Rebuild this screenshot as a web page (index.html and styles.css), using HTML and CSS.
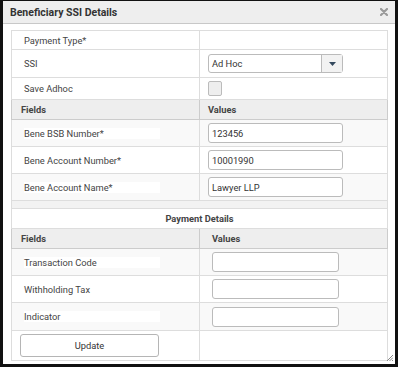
FILE: index.html
```html
<!DOCTYPE html>
<html lang="en">
<head>
  <meta charset="UTF-8">
  <title>Beneficiary SSI Details</title>
  <link rel="stylesheet" href="styles.css">
</head>
<body>

<div class="dialog">
  <div class="dialog-header">
    <span class="dialog-title">Beneficiary SSI Details</span>
    <svg class="close" width="8" height="8" viewBox="0 0 8 8">
      <path d="M1 1 L7 7 M7 1 L1 7" stroke="#9a9a9a" stroke-width="2.2" stroke-linecap="round"/>
    </svg>
  </div>

  <div class="dialog-body">
    <table class="ssi-table">
      <colgroup>
        <col class="col-field">
        <col class="col-value">
      </colgroup>
      <tr class="row-short">
        <td><label>Payment Type*</label></td>
        <td></td>
      </tr>
      <tr class="row-select">
        <td><label>SSI</label></td>
        <td>
          <div class="select">
            <span class="select-text">Ad Hoc</span>
            <span class="select-btn">
              <svg width="7" height="4" viewBox="0 0 7 4"><path d="M0 0 H7 L3.5 4 Z" fill="#34495e"/></svg>
            </span>
          </div>
        </td>
      </tr>
      <tr class="row-check">
        <td><label>Save Adhoc</label></td>
        <td><span class="checkbox"></span></td>
      </tr>
      <tr class="row-head">
        <th>Fields</th>
        <th>Values</th>
      </tr>
      <tr class="row-input stripe">
        <td><label class="boxed">Bene BSB Number*</label></td>
        <td><input class="field" type="text" value="123456"></td>
      </tr>
      <tr class="row-input">
        <td><label class="boxed">Bene Account Number*</label></td>
        <td><input class="field" type="text" value="10001990"></td>
      </tr>
      <tr class="row-input stripe">
        <td><label class="boxed">Bene Account Name*</label></td>
        <td><input class="field" type="text" value="Lawyer LLP"></td>
      </tr>
      <tr class="row-gap">
        <td colspan="2"></td>
      </tr>
      <tr class="row-title">
        <td colspan="2">Payment Details</td>
      </tr>
      <tr class="row-head second">
        <th>Fields</th>
        <th>Values</th>
      </tr>
      <tr class="row-input second stripe">
        <td><label class="boxed">Transaction Code</label></td>
        <td><input class="field small" type="text"></td>
      </tr>
      <tr class="row-input second">
        <td><label class="boxed">Withholding Tax</label></td>
        <td><input class="field small" type="text"></td>
      </tr>
      <tr class="row-input second stripe tall">
        <td><label class="boxed">Indicator</label></td>
        <td><input class="field small" type="text"></td>
      </tr>
      <tr class="row-button">
        <td><button class="btn" type="button">Update</button></td>
        <td></td>
      </tr>
    </table>
  </div>

  <!-- resize grip -->
  <svg class="grip" width="7" height="7" viewBox="0 0 7 7">
    <path d="M7 1 L1 7 M7 3.5 L3.5 7 M7 6 L6 7" stroke="#888" stroke-width="1"/>
  </svg>
</div>

</body>
</html>
```

FILE: styles.css
```css
body {
  margin: 0;
  background: #ffffff;
  font-family: 'Roboto', 'Liberation Sans', sans-serif;
  color: #333;
}
.dialog {
  position: relative;
  width: 398px;
  height: 367px;
  box-sizing: border-box;
  border: 3px solid #111;
  border-top-width: 1px;
  background: #fff;
}
.dialog-header {
  height: 23px;
  box-sizing: border-box;
  display: flex;
  align-items: center;
  justify-content: space-between;
  padding: 0 7px 0 7px;
  background: #eeeeee;
  border-bottom: 1px solid #c8c8c8;
}
.dialog-title {
  font-size: 10.5px;
  font-weight: 700;
  color: #333;
}
.dialog-body {
  padding: 6px 0 0 8px;
}
.ssi-table {
  width: 376px;
  table-layout: fixed;
  border-collapse: collapse;
  border: 1px solid #dddddd;
  font-size: 9.3px;
}
.col-field {
  width: 188px;
}
.col-value {
  width: 188px;
}
.ssi-table td,
.ssi-table th {
  border: 1px solid #dddddd;
  padding: 0 0 0 12px;
  text-align: left;
  vertical-align: middle;
}
.ssi-table td + td,
.ssi-table th + th {
  padding-left: 8px;
}
.ssi-table label {
  color: #444;
}
.row-short td {
  height: 18px;
}
.row-select td {
  height: 27px;
}
.row-check td {
  height: 21px;
}
.row-head th {
  height: 19px;
  background: #eeeeee;
  border-color: #cccccc;
  font-weight: 700;
  color: #444;
  padding-left: 9px;
}
.row-input td {
  height: 26px;
}
.row-input.tall td {
  height: 27px;
}
.stripe td {
  background: #f9f9f9;
}
.boxed {
  display: inline-block;
  width: 136px;
  line-height: 11px;
  background: #fff;
}
.row-gap td {
  height: 7px;
  padding: 0;
  background: #f2f2f2;
}
.row-title td {
  height: 19px;
  padding: 0;
  text-align: center;
  font-weight: 700;
  color: #444;
  background: #fff;
}
.second td + td,
.second th + th {
  padding-left: 12px;
}
.field {
  display: block;
  width: 135px;
  height: 20px;
  box-sizing: border-box;
  border: 1px solid #bbbbbb;
  border-radius: 3px;
  padding: 0 3px;
  font-family: 'Roboto', 'Liberation Sans', sans-serif;
  font-size: 9.3px;
  color: #333;
  background: #fff;
}
.field.small {
  width: 127px;
}
.select {
  display: flex;
  width: 135px;
  height: 19px;
  box-sizing: border-box;
  border: 1px solid #bbbbbb;
  border-radius: 3px;
  background: #fff;
}
.select-text {
  flex: 1;
  padding-left: 3px;
  line-height: 17px;
}
.select-btn {
  width: 20px;
  display: flex;
  align-items: center;
  justify-content: center;
  border-left: 1px solid #bbbbbb;
  background: #f2f2f2;
}
.checkbox {
  display: block;
  width: 14px;
  height: 15px;
  box-sizing: border-box;
  border: 1px solid #bbbbbb;
  border-radius: 2px;
  background: #eeeeee;
}
.row-button td {
  height: 29px;
  padding-left: 8px;
}
.btn {
  display: block;
  width: 139px;
  height: 23px;
  border: 1px solid #b5b5b5;
  border-radius: 3px;
  background: #fff;
  font-family: 'Roboto', 'Liberation Sans', sans-serif;
  font-size: 9.3px;
  color: #333;
}
.grip {
  position: absolute;
  right: 2px;
  bottom: 3px;
}
```
